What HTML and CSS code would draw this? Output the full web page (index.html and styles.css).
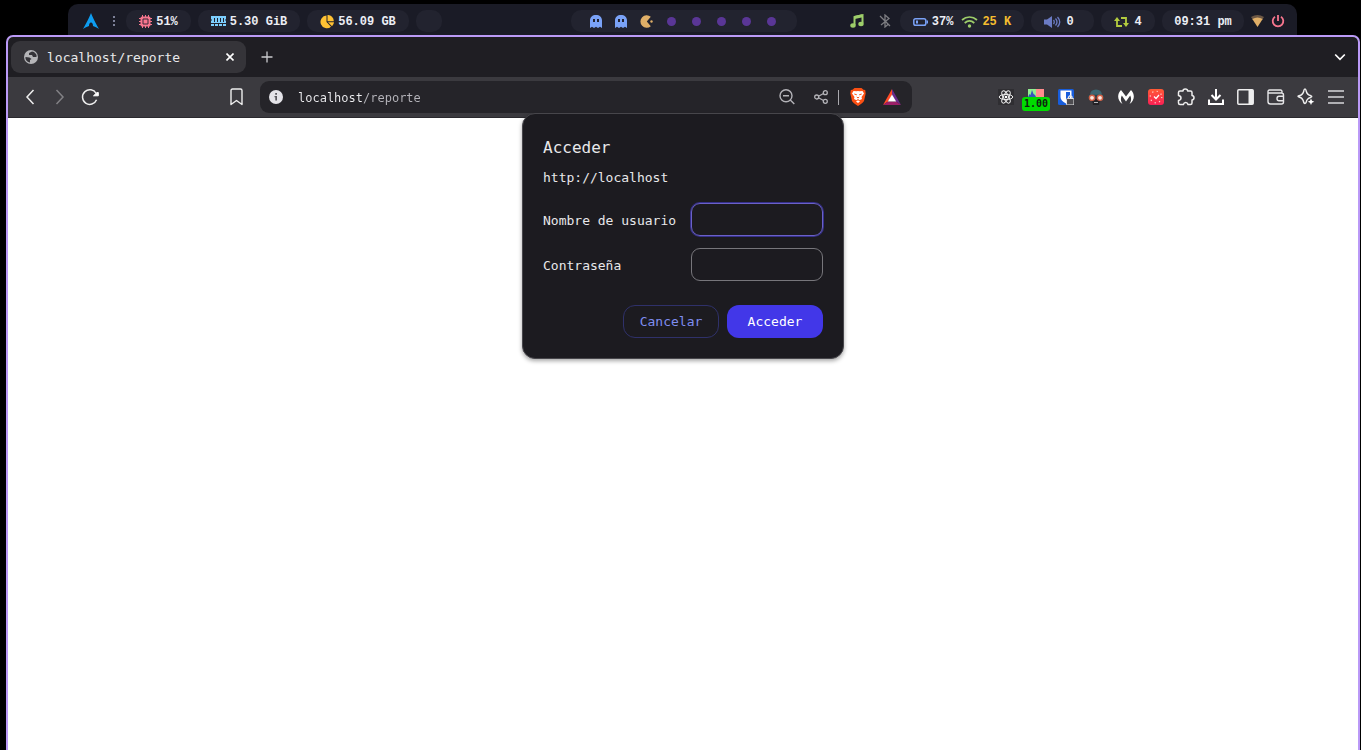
FILE: index.html
```html
<!DOCTYPE html>
<html lang="es">
<head>
<meta charset="utf-8">
<title>localhost/reporte</title>
<link rel="stylesheet" href="styles.css">
</head>
<body>
<header class="bar">
  <div class="bar-group">
    <button class="launcher" aria-label="Menú"><svg width="16" height="16" viewBox="0 0 16 16"><path fill="#0e9df0" d="M8 0C7 3 3 11 0 16c3-2 4.500-2.500 6-3 0-2 .8-3.500 2-3.500s2 1.500 2 3.500c1.500.5 3 1 6 3C13 11 9 3 8 0Z"/></svg></button>
    <svg class="grip" width="14" height="14" viewBox="0 0 14 14" fill="#7d8198"><path d="M6 2h2v2H6zM6 6h2v2H6zM6 10h2v2H6z"/></svg>
    <div class="pill pill-cpu"><svg width="13" height="13" viewBox="0 0 13 13"><path d="M3.500 0v13M6.500 0v13M9.500 0v13M0 3.500h13M0 6.500h13M0 9.500h13" stroke="#f7768e"/><rect x="1.500" y="1.500" width="10" height="10" rx="1.500" fill="#f7768e"/><path d="M4 4h5v5H4z" fill="#f7768e" stroke="#3b2938"/></svg><span>51%</span></div>
    <div class="pill pill-wide"><svg width="15" height="11" viewBox="0 0 15 11"><path fill="#7dcfff" d="M0 0h15v3l-1 1 1 1v2H0V5l1-1-1-1zM0 8h15v2H0z"/><path fill="#22232f" d="M3 2h1v4H3zM6 2h1v4H6zM9 2h1v4H9zM12 2h1v4h-1zM3 8h1v2H3zM7 8h1v2H7zM11 8h1v2h-1z"/></svg><span>5.30 GiB</span></div>
    <div class="pill pill-wide"><svg width="14" height="14" viewBox="0 0 14 14" fill="#ffc233"><path d="M6.500 .5v6.500l4.500 4.800A6.400 6.400 0 1 1 6.500 .5Z"/><path d="M7.500 0A6 6 0 0 1 13.800 6.200H7.500zM8 7.200h6a6 6 0 0 1-2 4z"/></svg><span>56.09 GB</span></div>
    <div class="pill pill-empty"></div>
  </div>
  <nav class="pill workspaces" aria-label="Espacios de trabajo">
    <button aria-label="1"><svg width="12" height="13" viewBox="0 0 12 13"><path fill="#7aa2f7" d="M0 13V5.500C0 2 2.500 0 6 0s6 2 6 5.500V13l-2-1.300L8 13l-2-1.300L4 13l-2-1.300z"/><path fill="#22232f" d="M3 4h2v3H3zM7 4h2v3H7z"/></svg></button>
    <button aria-label="2"><svg width="12" height="13" viewBox="0 0 12 13"><path fill="#7aa2f7" d="M0 13V5.500C0 2 2.500 0 6 0s6 2 6 5.500V13l-2-1.300L8 13l-2-1.300L4 13l-2-1.300z"/><path fill="#22232f" d="M3 4h2v3H3zM7 4h2v3H7z"/></svg></button>
    <button aria-label="3"><svg width="13" height="13" viewBox="0 0 13 13" fill="#e0af68"><path d="M10.800 1.700A6.300 6.300 0 1 0 10.800 11.300L6.800 6.500z"/><circle cx="11.500" cy="6.500" r="1.200"/></svg></button>
    <button aria-label="4"><i class="dot"></i></button>
    <button aria-label="5"><i class="dot"></i></button>
    <button aria-label="6"><i class="dot"></i></button>
    <button aria-label="7"><i class="dot"></i></button>
    <button aria-label="8"><i class="dot"></i></button>
  </nav>
  <div class="bar-group bar-end">
    <svg class="music" width="14" height="14" viewBox="0 0 14 14"><path d="M4.500 11V3l8-1.800v8" fill="none" stroke="#9ece6a" stroke-width="2"/><path d="M4.500 3.500l8-1.800" stroke="#9ece6a" stroke-width="3"/><ellipse cx="3" cy="11.500" rx="2.700" ry="2.200" fill="#9ece6a"/><ellipse cx="11" cy="10" rx="2.700" ry="2.200" fill="#9ece6a"/></svg>
    <svg class="bluetooth" width="12" height="14" viewBox="0 0 12 14" fill="none" stroke="#7d7d82" stroke-width="1.300"><path d="M1 2l10 10M2 11l8-6.500L6 1v12l3.500-3"/></svg>
    <div class="pill pill-power">
      <svg width="15" height="8" viewBox="0 0 15 8"><rect x=".8" y=".8" width="12" height="6.400" rx="1.800" fill="none" stroke="#7aa2f7" stroke-width="1.500"/><path d="M3 2.500h2v3H3zM13.500 2.500H15v3h-1.500z" fill="#7aa2f7"/></svg><span>37%</span>
      <svg class="wifi" width="17" height="12" viewBox="0 0 17 12" fill="none" stroke="#9ece6a" stroke-width="1.700"><path d="M1 4c4.500-4 10.500-4 15 0M3.700 7c3-2.700 6.600-2.700 9.600 0"/><circle cx="8.500" cy="10" r="1.700" fill="#9ece6a" stroke="none"/></svg><span class="rate">25 K</span>
    </div>
    <div class="pill pill-volume"><svg width="17" height="12" viewBox="0 0 17 12"><path fill="#6b7bc4" d="M0 3.500h3L8 0v12L3 8.500H0z"/><path d="M9.500 4q1.500 2 0 4M11.500 2.500q3 3.500 0 7M13.500 1q4.500 5 0 10" fill="none" stroke="#6b7bc4" stroke-width="1.300"/></svg><span>0</span></div>
    <div class="pill pill-updates"><svg width="15" height="10" viewBox="0 0 15 10" fill="none" stroke="#b3cc3f" stroke-width="1.800"><path d="M8 9H3V2M7 1h5v7"/><path d="M0 4l3-4 3 4zM9 6l3 4 3-4z" fill="#b3cc3f" stroke="none"/></svg><span>4</span></div>
    <div class="pill pill-clock"><time>09:31 pm</time></div>
    <svg class="signal" width="13" height="12" viewBox="0 0 13 12"><path fill="#6b5745" d="M0 2q6.500-4 13 0l-2 3H2z"/><path fill="#e0af68" d="M1.300 4q5.200-3 10.400 0L6.500 12z"/></svg>
    <button class="shutdown" aria-label="Apagar"><svg width="14" height="14" viewBox="0 0 14 14" fill="none" stroke="#f7768e" stroke-width="1.800"><path d="M7 1v6M4 2.700a5.300 5.300 0 1 0 6 0"/></svg></button>
  </div>
</header>

<main class="window">
  <div class="tabs">
    <div class="tab">
      <svg width="14" height="14" viewBox="0 0 14 14"><circle cx="7" cy="7" r="7" fill="#b5b5b8"/><path d="M8 1.500L5 3v2h3l1 2h3c1 0 .8-2 0-3L10 2zM1.500 7l4 .5 2 1.500-1.500 1v2.500C3 12 1 9.500 1.500 7Z" fill="#353439"/></svg>
      <span class="tab-title">localhost/reporte</span>
      <button aria-label="Cerrar"><svg width="8" height="8" viewBox="0 0 8 8"><path d="M.5.5l7 7M7.500.5l-7 7" stroke="#fff" stroke-width="1.600"/></svg></button>
    </div>
    <button class="new-tab" aria-label="Nueva pestaña"><svg width="12" height="12" viewBox="0 0 12 12"><path d="M6 .5v11M.5 6h11" stroke="#cbcbce" stroke-width="1.300"/></svg></button>
    <button class="tab-list" aria-label="Buscar pestañas"><svg width="12" height="8" viewBox="0 0 12 8"><path d="M1.200 1.500L6 6.300l4.800-4.800" fill="none" stroke="#fff" stroke-width="1.700"/></svg></button>
  </div>

  <div class="toolbar">
    <button class="tool" aria-label="Atrás"><svg width="10" height="16" viewBox="0 0 10 16"><path d="M8.500 1L2 8l6.500 7" fill="none" stroke="#eee" stroke-width="1.500"/></svg></button>
    <button class="tool" aria-label="Adelante"><svg width="10" height="16" viewBox="0 0 10 16"><path d="M1.500 1L8 8l-6.500 7" fill="none" stroke="#828185" stroke-width="1.500"/></svg></button>
    <button class="tool" aria-label="Recargar"><svg width="18" height="18" viewBox="0 0 18 18"><path d="M15.200 5.500A7.300 7.300 0 1 0 15.600 11.800" fill="none" stroke="#eee" stroke-width="1.500"/><path d="M12.500 7.800h4.800V4.500l-1.500.2z" fill="#fff" stroke="#fff"/></svg></button>
    <span class="gap-start"></span>
    <button class="tool" aria-label="Marcador"><svg width="14" height="18" viewBox="0 0 14 18"><path d="M1 16.500V2.500q0-1.500 1.500-1.500h8q1.500 0 1.500 1.500v14l-5.500-4z" fill="none" stroke="#eee" stroke-width="1.400" stroke-linejoin="round"/></svg></button>
    <div class="address">
      <svg width="14" height="14" viewBox="0 0 14 14"><circle cx="7" cy="7" r="7" fill="#e4e3e8"/><path d="M6.200 3h1.800v1.800H6.200zM5.500 6H8v4.500H6.300V7.200h-.8z" fill="#57565c"/></svg>
      <input type="text" value="localhost/reporte" aria-label="Dirección">
      <button aria-label="Zoom"><svg width="16" height="16" viewBox="0 0 16 16" fill="none" stroke="#b4b3b8" stroke-width="1.400"><circle cx="7" cy="6.800" r="6"/><path d="M4 6.800h6M11.300 11l4 4"/></svg></button>
      <button aria-label="Compartir"><svg width="14" height="14" viewBox="0 0 14 14" fill="none" stroke="#b4b3b8" stroke-width="1.300"><circle cx="2.700" cy="7" r="2"/><circle cx="11.300" cy="2.700" r="2"/><circle cx="11.300" cy="11.300" r="2"/><path d="M4.500 6.200l5-2.700M4.500 7.800l5 2.700"/></svg></button>
      <i class="rule"></i>
      <button class="shields" aria-label="Brave Shields"><svg width="16" height="18" viewBox="0 0 16 18"><path fill="#fb5013" d="M4.500 0h7l2 1.800 1.700.2.500 3.500L14 13q-1 2-6 5-5-3-6-5L.3 5.500.8 2l1.700-.2z"/><path fill="#fff" d="M3.500 3l3 .3L8 3l1.500.3 3-.3L14 5.500 11.500 9l.5 2-2.500 1.200L8 11l-1.500 1.200L4 11l.5-2L2 5.500zM8 12.200l2 1.300L8 15l-2-1.500z"/><path d="M4.300 6l2.500.8M11.700 6l-2.500.8M6.800 9L8 10l1.200-1" stroke="#fb5013" fill="none"/></svg></button>
      <button aria-label="Brave Rewards"><svg width="18" height="16" viewBox="0 0 18 16"><path fill="#ff4b26" d="M9 0L0 16l5-3.500L9 6z"/><path fill="#682b8c" d="M9 0l9 16-5-3.500L9 6z"/><path fill="#9b1f68" d="M0 16h18l-5-3.500H5z"/><path fill="#fff" d="M9 5.500l4.200 7H4.800z"/></svg></button>
    </div>
    <span class="gap-end"></span>
    <button class="tool" aria-label="React"><svg width="16" height="16" viewBox="0 0 16 16"><path fill="#2f2e32" d="M0 0h16v16H0z"/><g fill="none" stroke="#eee"><ellipse cx="8" cy="8" rx="6.800" ry="2.600"/><ellipse cx="8" cy="8" rx="6.800" ry="2.600" transform="rotate(60 8 8)"/><ellipse cx="8" cy="8" rx="6.800" ry="2.600" transform="rotate(120 8 8)"/></g><circle cx="8" cy="8" r="1.300" fill="#fff"/></svg></button>
    <button class="tool speed" aria-label="Velocidad 1.00"><svg width="16" height="16" viewBox="0 0 16 16"><path fill="#91ee91" d="M0 0h8v16H0z"/><path fill="#ff8d8d" d="M8 0h8v16H8z"/><path fill="#3455bd" d="M0 8l1.500-3 1 1L4 1l1.500 4L7 6l1 2z"/></svg><span class="badge">1.00</span></button>
    <button class="tool" aria-label="Bitwarden"><svg width="16" height="16" viewBox="0 0 16 16"><rect width="16" height="16" rx="1.500" fill="#175ddc"/><path d="M2.500 1.500h11V8q0 3.500-5.500 6.500-5.500-3-5.500-6.500z" fill="#fff"/><path d="M8 3h4v5q0 2.500-4 4.500z" fill="#175ddc"/><path d="M10.500 9.500V8q1.700-2.500 3.500 0v1.500" fill="none" stroke="#e6e6e6" stroke-width="1.300"/><rect x="8.500" y="9.500" width="7.500" height="6.500" rx="1" fill="#4d4c50" stroke="#e6e6e6"/></svg></button>
    <button class="tool" aria-label="Explorador"><svg width="16" height="16" viewBox="0 0 16 16"><path d="M2 6.500Q2 .5 8 .5t6 6z" fill="#3a6570"/><path d="M4 10h8l-1 6H5z" fill="#242226"/><path d="M0 6.500h16" stroke="#24474f" stroke-width="1.500"/><circle cx="4" cy="8.800" r="2.600" fill="#fbe9e0" stroke="#cf5f45" stroke-width="1.400"/><circle cx="12" cy="8.800" r="2.600" fill="#fbe9e0" stroke="#cf5f45" stroke-width="1.400"/><path d="M6 13.500h4" stroke="#b5b5b8"/></svg></button>
    <button class="tool" aria-label="Malwarebytes"><svg width="16" height="16" viewBox="0 0 16 16"><path fill="#fff" d="M3 1l5 6.500L13 1c4 4 4 10-1.500 14 2-3 2-6 .7-8.500L8 12.500 3.800 6.500C2.500 9 2.500 12 4.500 15-1 11-1 5 3 1Z"/></svg></button>
    <button class="tool" aria-label="Reloj"><svg width="16" height="16" viewBox="0 0 16 16"><defs><linearGradient id="sun" x2="0" y2="1"><stop stop-color="#ff5b35"/><stop offset="1" stop-color="#fa1f55"/></linearGradient></defs><rect width="16" height="16" rx="3" fill="url(#sun)"/><circle cx="8" cy="8" r="5.800" fill="none" stroke="#ffd4ce" stroke-width="1.200" stroke-dasharray="1.200 3.350"/><path d="M6 7.500L8 9.500l3-3.500" fill="none" stroke="#fff" stroke-width="1.200"/></svg></button>
    <button class="tool" aria-label="Extensiones"><svg width="18" height="18" viewBox="0 0 18 18"><path d="M3 3h3Q6 1 8.300 1T10.600 3H13.500q1.500 0 1.500 1.500V7.500q2 .3 2 2.300t-2 2.300V15q0 1.500-1.500 1.500H11q-.5-2-2.300-2t-2.300 2H3q-1.500 0-1.500-1.500V12.500Q4 12 4 10T1.500 7.500v-3Q1.500 3 3 3z" fill="none" stroke="#eee" stroke-width="1.500" stroke-linejoin="round"/></svg></button>
    <button class="tool" aria-label="Descargas"><svg width="16" height="16" viewBox="0 0 16 16"><path d="M8 0v10M3.500 6L8 10.500 12.500 6M1 10.500V15h14v-4.500" fill="none" stroke="#fff" stroke-width="2"/></svg></button>
    <button class="tool" aria-label="Panel lateral"><svg width="18" height="16" viewBox="0 0 18 16"><rect x=".8" y=".8" width="15.400" height="14.400" rx="1" fill="none" stroke="#eee" stroke-width="1.500"/><path d="M11.500 1H16v14h-4.500z" fill="#eee"/></svg></button>
    <button class="tool" aria-label="Cartera"><svg width="18" height="16" viewBox="0 0 18 16" fill="none" stroke="#e6e6e8" stroke-width="1.400"><path d="M15 4V2.500Q15 1 13.500 1h-11Q1 1 1 2.500v10Q1 15 3.500 15h11q2 0 2-2V6q0-2-2-2H1"/><path d="M16.500 7.300H12q-2 0-2 2.200t2 2.200h4.500"/></svg></button>
    <button class="tool" aria-label="Leo"><svg width="18" height="18" viewBox="0 0 18 18"><path d="M8 1q.8 0 1.200 2 .8 3.800 4.800 4.800 1.500.7 0 1.400-3 .6-4.200 3-.7 3.300-1.800 3.300-1.200 0-1.800-3Q5 9.500 2 9q-2-.7 0-1.300Q6 7 6.800 3 7 1 8 1Z" fill="none" stroke="#eee" stroke-width="1.400"/><path d="M14 10.500l1 2.200 2.300 1-2.300 1L14 17l-1-2.300-2.200-1 2.200-1z" fill="#fff"/></svg></button>
    <button class="tool" aria-label="Menú"><svg width="16" height="14" viewBox="0 0 16 14"><path d="M0 1h16M0 7h16M0 13h16" stroke="#d8d8db" stroke-width="1.400"/></svg></button>
  </div>

  <form class="dialog" role="dialog" aria-labelledby="title">
    <h1 id="title">Acceder</h1>
    <p>http://localhost</p>
    <div class="fields">
      <label for="user">Nombre de usuario</label><input class="focused" id="user" type="text">
      <label for="pass">Contraseña</label><input id="pass" type="password">
    </div>
    <div class="actions">
      <button type="button" class="cancel">Cancelar</button>
      <button type="submit" class="submit">Acceder</button>
    </div>
  </form>
</main>
</body>
</html>
```

FILE: styles.css
```css
* { box-sizing: border-box; }

body {
  margin: 0;
  height: 100vh;
  display: flex;
  flex-direction: column;
  overflow: hidden;
  background: #000;
  color: #e8e8ea;
  font: 13px/18px "DejaVu Sans Mono", monospace;
}

button, input { font: inherit; color: inherit; }
button { padding: 0; border: 0; background: none; display: flex; align-items: center; justify-content: center; }
svg { display: block; flex: none; }

/* Status bar */
.bar {
  display: grid;
  grid-template-columns: 1fr auto 1fr;
  margin: 4px 64px 0 68px;
  padding: 6px 12px 3px 14px;
  background: #1a1b26;
  border-radius: 10px 10px 0 0;
  color: #eceef5;
  font: bold 12px/22px "Liberation Mono", monospace;
}
.bar-group { display: flex; align-items: center; gap: 7px; }
.bar-end { justify-content: flex-end; }
.launcher { width: 18px; }
.grip { margin-right: -2px; }
.pill {
  display: flex;
  align-items: center;
  justify-content: center;
  gap: 4px;
  height: 22px;
  padding-top: 1px;
  border-radius: 10px;
  background: #22232f;
  white-space: nowrap;
}
.pill-cpu { width: 65px; }
.pill-wide { width: 102px; }
.pill-empty { width: 26px; }
.pill-power { width: 124px; }
.pill-volume { width: 63px; gap: 5px; padding-right: 7px; }
.pill-updates { width: 54px; gap: 5px; }
.pill-clock { width: 82px; }
.workspaces { gap: 0; padding: 1px 13px 0; }
.workspaces button { width: 25px; height: 20px; }
.dot { width: 9px; height: 9px; border-radius: 50%; background: #5a3696; }
.music { margin-right: 8px; }
.bluetooth { margin-right: 2px; }
.wifi { margin-left: 4px; }
.rate { color: #f5bd2f; }

/* Browser window */
.window {
  position: relative;
  flex: 1;
  margin: 0 1px 0 6px;
  border: 2px solid #bb9af7;
  border-bottom: 0;
  border-radius: 7px 7px 0 0;
  background: #fff;
}
.tabs {
  display: flex;
  align-items: center;
  height: 40px;
  padding: 0 3px;
  background: #1f1e23;
  border-radius: 5px 5px 0 0;
}
.tab {
  display: flex;
  align-items: center;
  gap: 9px;
  width: 235px;
  height: 32px;
  padding: 0 12px 0 13px;
  border-radius: 9px;
  background: #353439;
}
.tab-title { flex: 1; padding-top: 1px; }
.new-tab { margin-left: 15px; }
.tab-list { margin: 0 12px 0 auto; margin-right: 9px; }

.toolbar {
  display: flex;
  align-items: center;
  height: 41px;
  padding: 0 7px;
  background: #3b3a3f;
  border-bottom: 1px solid #2a292e;
}
.tool { position: relative; flex: none; width: 30px; height: 30px; }
.gap-start { flex: 117 1 0; }
.gap-end { flex: 79 1 0; }
.address {
  display: flex;
  align-items: center;
  flex: 0 1 652px;
  height: 32px;
  margin-left: 8px;
  padding: 0 3px 0 9px;
  border-radius: 9px;
  background: #252429;
}
.address input {
  flex: 1;
  min-width: 0;
  margin-left: 15px;
  padding: 1px 0 0;
  border: 0;
  outline: 0;
  background: linear-gradient(90deg, #eeeef1 9ch, #b5b4ba 9ch);
  background-clip: text;
  color: transparent;
  font-size: 12px;
}
.address button { width: 34px; height: 30px; }
.rule { width: 1px; height: 15px; background: #aaa9ae; }
.address .shields { margin-left: 2px; }
.badge {
  position: absolute;
  left: 1px;
  top: 15px;
  width: 28px;
  border-radius: 3px;
  background: #00dc00;
  color: #102010;
  font: bold 10px/14px "DejaVu Sans Mono", monospace;
}

/* Sign-in dialog */
.dialog {
  position: absolute;
  top: 76px;
  left: 50%;
  transform: translateX(-50%);
  width: 322px;
  padding: 21px 20px 20px;
  border: 1px solid #47464b;
  border-radius: 13px;
  background: #1c1b20;
  box-shadow: 0 2px 4px rgba(0, 0, 0, .35);
}
.dialog h1 { margin: 0 0 8px; font-size: 16px; font-weight: normal; line-height: 26px; }
.dialog p { margin: 0 0 16px; }
.fields { display: grid; grid-template-columns: 1fr 132px; gap: 12px; align-items: center; }
.fields label { padding-top: 2px; }
.fields input {
  width: 100%;
  height: 33px;
  padding: 0 10px;
  border: 1px solid #77767b;
  border-radius: 9px;
  outline: 0;
  background: transparent;
}
.fields .focused { border-color: #6b61c8; box-shadow: 0 0 0 1px #35308a; }
.actions { display: flex; justify-content: flex-end; gap: 8px; margin-top: 24px; }
.actions button { width: 96px; height: 33px; border-radius: 12px; }
.cancel { border: 1px solid #2f316a; color: #7f8df0; }
.submit { background: #4237e8; color: #fff; }
```
